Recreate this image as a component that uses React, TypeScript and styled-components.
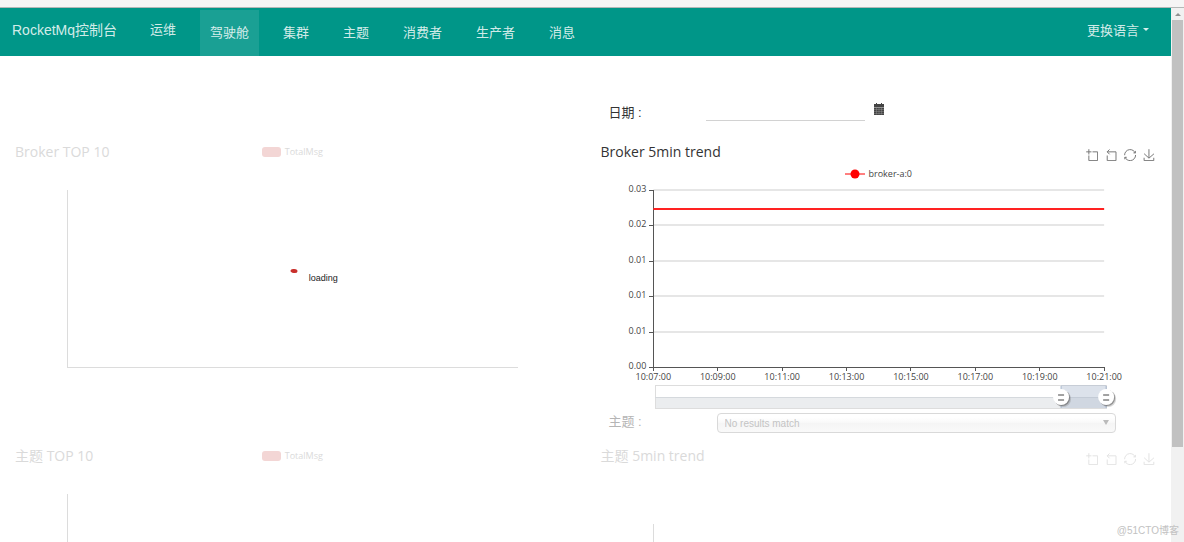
import React from 'react';
import styled, { createGlobalStyle } from 'styled-components';

const GlobalStyle = createGlobalStyle`
  *, *::before, *::after { box-sizing: border-box; }
  body {
    margin: 0;
    background: #fff;
    color: #333;
    font-family: "Liberation Sans", "Noto Sans CJK SC", sans-serif;
    font-size: 13px;
  }
`;

const chartFont = '"Open Sans", "Noto Sans CJK SC", sans-serif';

const Screen = styled.div`
  position: relative;
  display: flex;
  flex-direction: column;
  height: 100vh;
  overflow: hidden;
`;

const TopStrip = styled.div`
  flex: none;
  height: 8px;
  background: #f5f5f5;
  border-bottom: 1px solid #b4b8b7;
`;

const Viewport = styled.div`
  display: flex;
  flex: 1;
  min-height: 0;
`;

const Page = styled.div`
  flex: 1;
  min-width: 0;
  overflow: hidden;
`;

const NavBar = styled.header`
  display: flex;
  align-items: stretch;
  height: 48px;
  padding: 0 22px 0 12px;
  background: #009688;
  color: rgba(255, 255, 255, 0.84);
`;

const Brand = styled.a`
  width: 128px;
  padding-top: 12px;
  color: inherit;
  font-size: 14px;
  line-height: 20px;
  text-decoration: none;
  white-space: nowrap;
`;

const NavLinks = styled.nav`
  display: flex;
  flex: 1;
  gap: 14px;
  padding-top: 2px;
`;

const NavLink = styled.a<{ $active?: boolean; $raised?: boolean }>`
  padding: ${p => (p.$raised ? '10px' : '13px')} 10px 0;
  background: ${p => (p.$active ? 'rgba(255, 255, 255, 0.1)' : 'transparent')};
  color: inherit;
  line-height: 20px;
  text-decoration: none;
  white-space: nowrap;
`;

const LanguageButton = styled.button`
  display: flex;
  align-items: center;
  align-self: flex-start;
  gap: 4px;
  height: 20px;
  margin-top: 11px;
  padding: 0;
  border: 0;
  background: none;
  color: inherit;
  font: inherit;
`;

const Caret = styled.span`
  border: 3px solid transparent;
  border-top-color: currentColor;
  border-bottom: 0;
`;

const Board = styled.main`
  display: grid;
  grid-template-columns: 1fr 1fr;
  grid-template-rows: 44px 270px 34px auto;
  padding-top: 40px;
`;

const FieldRow = styled.div<{ $faded?: boolean }>`
  display: flex;
  grid-column: 2;
  padding: 0 55px 0 23px;
  color: ${p => (p.$faded ? '#b5b5b5' : '#333')};
`;

const FieldLabel = styled.label<{ $width: number }>`
  width: ${p => p.$width}px;
  line-height: 20px;
`;

const DateField = styled.div`
  display: flex;
  align-items: flex-start;
  gap: 8px;
  padding-top: 7px;
`;

const DateLabel = styled(FieldLabel)`
  padding-top: 7px;
`;

const TopicLabel = styled(FieldLabel)`
  padding-top: 2px;
`;

const DateInput = styled.input`
  width: 159px;
  height: 18px;
  padding: 0;
  border: 0;
  border-bottom: 1px solid #d2d2d2;
  background: none;
  font: inherit;
  outline: none;
`;

const IconButton = styled.button`
  display: block;
  padding: 0;
  border: 0;
  background: none;
  color: inherit;
  line-height: 0;
`;

const SelectBox = styled.div`
  position: relative;
  flex: 1;
  padding-top: 3px;
`;

const TopicSelect = styled.select`
  display: block;
  width: 100%;
  height: 20px;
  padding: 0 7px;
  appearance: none;
  border: 1px solid #d9d9d9;
  border-radius: 4px;
  background: linear-gradient(#fff 20%, #f8f8f8 50%, #f5f5f5 52%, #f9f9f9 100%);
  color: #c4c4c4;
  font-family: inherit;
  font-size: 10px;
  opacity: 1;
`;

const SelectArrow = styled.span`
  position: absolute;
  top: 10px;
  right: 7px;
  border: 3px solid transparent;
  border-top: 5px solid #bbb;
  border-bottom: 0;
  pointer-events: none;
`;

const ChartCard = styled.section`
  position: relative;
  padding: 0 11px;
  font-family: ${chartFont};
`;

const ChartHead = styled.div`
  display: grid;
  grid-template-columns: 1fr auto 1fr;
  align-items: center;
  height: 24px;
  padding: 0 5px 0 4px;
`;

const ChartTitle = styled.h2<{ $faded?: boolean }>`
  margin: 0;
  color: ${p => (p.$faded ? '#dadada' : '#333')};
  font-size: 14px;
  font-weight: 400;
  line-height: 24px;
  white-space: nowrap;
`;

const Legend = styled.div<{ $faded?: boolean }>`
  display: flex;
  align-items: center;
  justify-content: center;
  gap: 4px;
  color: ${p => (p.$faded ? '#dadada' : '#444')};
  font-size: 9px;
  line-height: 20px;
`;

const LegendRow = styled.div`
  height: 20px;
`;

const Swatch = styled.span`
  width: 19px;
  height: 10px;
  border-radius: 3px;
  background: #f3d6d5;
`;

const Toolbox = styled.div<{ $faded?: boolean }>`
  display: flex;
  grid-column: 3;
  justify-content: flex-end;
  gap: 7px;
  padding-top: 5px;
  color: ${p => (p.$faded ? '#e2e2e2' : '#777')};
`;

const Plot = styled.svg`
  display: block;
  width: 100%;
  overflow: visible;
`;

const Loader = styled.div`
  position: absolute;
  inset: 0;
  display: flex;
  align-items: center;
  padding-left: 50%;
  color: #222;
  font-family: "Liberation Sans", sans-serif;
  font-size: 9px;
`;

const LoaderText = styled.span`
  padding-top: 6px;
`;

const ScrollTrack = styled.div`
  display: flex;
  flex: none;
  flex-direction: column;
  align-items: center;
  width: 13px;
  background: #f1f1f1;
`;

const ScrollUp = styled.div`
  display: flex;
  align-items: center;
  justify-content: center;
  height: 12px;
`;

const ScrollArrow = styled.span`
  border: 3px solid transparent;
  border-top: 0;
  border-bottom-color: #909090;
`;

const ScrollThumb = styled.div`
  width: 11px;
  height: 80%;
  background: #c1c1c1;
`;

const Watermark = styled.div`
  position: absolute;
  right: 5px;
  bottom: 4px;
  color: #c2c2c2;
  font-size: 10px;
  line-height: 14px;
`;

const tools = [
  { label: 'Zoom', d: 'M0,13.5h26.9 M13.5,26.9V0 M32.1,13.5H58V58H13.5V32.1' },
  { label: 'Zoom reset', d: 'M22,1.4L9.9,13.5l12.3,12.3 M10.3,13.5H54.9v44.6H10.3v-26' },
  {
    label: 'Restore',
    d: 'M47,18.9h9.8V8.7 M56.3,20.1C52.1,9,40.5,0.6,26.8,2.1C12.6,3.7,1.6,16.2,2.1,30.6 M13,41.1H3.1v10.2 M3.7,39.9c4.2,11.1,15.8,19.5,29.5,18c14.2-1.6,25.2-14.1,24.7-28.5',
  },
  { label: 'Save as image', d: 'M4.7,22.9L29.3,45.5L54.7,23.4M4.6,43.6L4.6,58L53.8,58L53.8,43.6M29.2,45.1L29.2,0' },
];

function ChartTools({ faded }: { faded?: boolean }) {
  return (
    <Toolbox $faded={faded}>
      {tools.map(t => (
        <IconButton key={t.label} type="button" aria-label={t.label}>
          <svg width="12" height="12" viewBox="-1 -1 61 61" fill="none" stroke="currentColor" strokeWidth="5">
            <path d={t.d} />
          </svg>
        </IconButton>
      ))}
    </Toolbox>
  );
}

function TotalLegend() {
  return (
    <Legend $faded>
      <Swatch />
      TotalMsg
    </Legend>
  );
}

function EmptyAxes({ top }: { top: number }) {
  return (
    <Plot height="226" stroke="#dcdcdc" shapeRendering="crispEdges">
      <line x1="10%" x2="10%" y1={top} y2="183" />
      <line x1="10%" x2="90%" y1="183" y2="183" />
    </Plot>
  );
}

const yTicks = [
  { y: 6, text: '0.03' },
  { y: 41, text: '0.02' },
  { y: 77, text: '0.01' },
  { y: 112, text: '0.01' },
  { y: 148, text: '0.01' },
  { y: 183, text: '0.00' },
];

const xTicks = ['10:07:00', '10:09:00', '10:11:00', '10:13:00', '10:15:00', '10:17:00', '10:19:00', '10:21:00'];

function ZoomHandle({ x }: { x: string }) {
  return (
    <svg x={x} y="213" width="1" height="1" overflow="visible">
      <line x1="0" x2="0" y1="-11" y2="11" stroke="#a7b7cc" />
      <circle cx="2" cy="2" r="8" fill="#777" opacity="0.3" />
      <circle cx="1" cy="1" r="8" fill="#666" opacity="0.6" />
      <circle cx="0" cy="0" r="8" fill="#fff" />
      <path d="M-3,-2H3M-3,3H3" stroke="#444" fill="none" />
    </svg>
  );
}

function TrendPlot() {
  return (
    <Plot height="226" fontSize="9" fill="#444">
      {yTicks.map((t, i) => (
        <g key={t.y}>
          {i < 5 && <line x1="10%" x2="90%" y1={t.y} y2={t.y} stroke="#e6e6e6" strokeWidth="2" />}
          <svg x="10%" y={t.y} width="1" height="1" overflow="visible">
            <line x1="-4" x2="0" y1="0" y2="0" stroke="#555" shapeRendering="crispEdges" />
            <text x="-7" y="2" textAnchor="end">{t.text}</text>
          </svg>
        </g>
      ))}
      <line x1="10%" x2="10%" y1="6" y2="183" stroke="#555" shapeRendering="crispEdges" />
      <line x1="10%" x2="90%" y1="183" y2="183" stroke="#555" shapeRendering="crispEdges" />
      {xTicks.map((t, i) => (
        <svg key={t} x={`${10 + (i * 80) / 7}%`} y="183" width="1" height="1" overflow="visible">
          <line x1="0" x2="0" y1="0" y2="4" stroke="#555" shapeRendering="crispEdges" />
          <text x="0" y="13" textAnchor="middle">{t}</text>
        </svg>
      ))}
      <line x1="10%" x2="90%" y1="25" y2="25" stroke="#f22" strokeWidth="2" />
      <g transform="translate(2 0)">
        <rect x="10%" y="213" width="80%" height="11" fill="#ebedef" />
        <rect x="10%" y="201" width="80%" height="23" fill="none" stroke="#ddd" shapeRendering="crispEdges" />
        <line x1="10%" x2="90%" y1="213" y2="213" stroke="#d5d9dd" shapeRendering="crispEdges" />
        <rect x="82%" y="201" width="8%" height="23" fill="#a7b7cc" opacity="0.4" />
        <ZoomHandle x="82%" />
        <ZoomHandle x="90%" />
      </g>
    </Plot>
  );
}

const navItems = [
  { text: '运维', raised: true },
  { text: '驾驶舱', active: true },
  { text: '集群' },
  { text: '主题' },
  { text: '消费者' },
  { text: '生产者' },
  { text: '消息' },
];

export default function App() {
  return (
    <Screen>
      <GlobalStyle />
      <TopStrip />
      <Viewport>
        <Page>
          <NavBar>
            <Brand href="#">RocketMq控制台</Brand>
            <NavLinks>
              {navItems.map(n => (
                <NavLink key={n.text} href="#" $active={n.active} $raised={n.raised}>
                  {n.text}
                </NavLink>
              ))}
            </NavLinks>
            <LanguageButton type="button">
              更换语言
              <Caret />
            </LanguageButton>
          </NavBar>
          <Board>
            <FieldRow>
              <DateLabel htmlFor="date" $width={97}>日期 :</DateLabel>
              <DateField>
                <DateInput id="date" type="text" />
                <IconButton type="button" aria-label="Calendar">
                  <svg width="12" height="13" viewBox="0 0 12 13">
                    <path d="M1 1h10v3H1zM3 0h1v2H3zM8 0h1v2H8zM1 4h10v8H1z" fill="#444" />
                    <path d="M1 4.5h10" stroke="#aaa" strokeWidth="0.8" />
                    <path d="M1 6.5h10M1 8.5h10M1 10.5h10M3.5 4.5v7M6 4.5v7M8.5 4.5v7" stroke="#999" strokeWidth="0.4" />
                  </svg>
                </IconButton>
              </DateField>
            </FieldRow>

            <ChartCard>
              <ChartHead>
                <ChartTitle $faded>Broker TOP 10</ChartTitle>
                <TotalLegend />
              </ChartHead>
              <LegendRow />
              <EmptyAxes top={6} />
              <Loader>
                <svg width="16" height="16" viewBox="0 0 16 16" overflow="visible">
                  <ellipse cx="1" cy="4" rx="3.5" ry="2" fill="#c9302c" transform="rotate(8 1 4)" />
                </svg>
                <LoaderText>loading</LoaderText>
              </Loader>
            </ChartCard>

            <ChartCard>
              <ChartHead>
                <ChartTitle>Broker 5min trend</ChartTitle>
                <ChartTools />
              </ChartHead>
              <LegendRow>
                <Legend>
                  <svg width="20" height="10" viewBox="0 0 20 10">
                    <path d="M0 5h20" stroke="#f00" />
                    <circle cx="10" cy="5" r="4.5" fill="#f00" />
                  </svg>
                  broker-a:0
                </Legend>
              </LegendRow>
              <TrendPlot />
            </ChartCard>

            <FieldRow $faded>
              <TopicLabel htmlFor="topic" $width={108}>主题 :</TopicLabel>
              <SelectBox>
                <TopicSelect id="topic" disabled>
                  <option>No results match</option>
                </TopicSelect>
                <SelectArrow />
              </SelectBox>
            </FieldRow>

            <ChartCard>
              <ChartHead>
                <ChartTitle $faded>主题 TOP 10</ChartTitle>
                <TotalLegend />
              </ChartHead>
              <LegendRow />
              <EmptyAxes top={6} />
            </ChartCard>

            <ChartCard>
              <ChartHead>
                <ChartTitle $faded>主题 5min trend</ChartTitle>
                <ChartTools faded />
              </ChartHead>
              <LegendRow />
              <EmptyAxes top={36} />
            </ChartCard>
          </Board>
        </Page>
        <ScrollTrack>
          <ScrollUp>
            <ScrollArrow />
          </ScrollUp>
          <ScrollThumb />
        </ScrollTrack>
      </Viewport>
      <Watermark>@51CTO博客</Watermark>
    </Screen>
  );
}
